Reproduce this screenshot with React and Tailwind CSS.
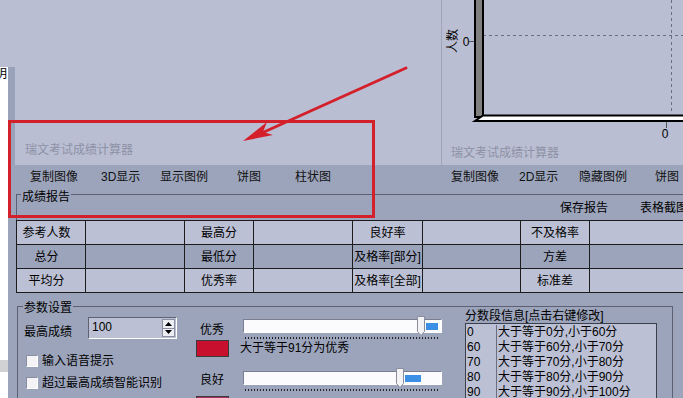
import React from 'react';

const reportRows = [
  { bg: 'bg-[#bcc0d4]', cells: ['参考人数', '最高分', '良好率', '不及格率'] },
  { bg: 'bg-[#9ca4bb]', cells: ['总分', '最低分', '及格率[部分]', '方差'] },
  { bg: 'bg-[#bcc0d4]', cells: ['平均分', '优秀率', '及格率[全部]', '标准差'] },
];

const bands = [
  ['0', '大于等于0分,小于60分'],
  ['60', '大于等于60分,小于70分'],
  ['70', '大于等于70分,小于80分'],
  ['80', '大于等于80分,小于90分'],
  ['90', '大于等于90分,小于100分'],
];

// trackbar: white sunken track, thumb with pointed foot, blue selection after it
const Slider = ({ thumbAt, fillWidth }) => (
  <div className="w-[199px]">
    <div className="flex h-[14px] items-center border border-t-[#7a7e90] border-l-[#7a7e90] border-b-white border-r-white bg-[#fbfbfd]">
      <div style={{ width: thumbAt }} className="shrink-0" />
      <svg width="8" height="20" className="-my-[3px] shrink-0 self-start -mt-[4px]">
        <polygon points="0.5,0.5 7.5,0.5 7.5,15.5 4,19.5 0.5,15.5" fill="#f3f3f6" stroke="#8a8e9e" />
      </svg>
      <div style={{ width: fillWidth }} className="ml-[1px] h-[7px] bg-[#3b8fe4]" />
    </div>
    <div className="ml-[2px] mt-[4px] h-[2px] w-[193px] bg-[repeating-linear-gradient(90deg,#222_0_1px,transparent_1px_3px)]" />
  </div>
);

const Checkbox = () => (
  <div className="ml-[2px] h-[12px] w-[12px] shrink-0 border border-t-[#8a8e9e] border-l-[#8a8e9e] border-b-white border-r-white bg-[#f4f4f6]" />
);

const Chart = () => (
  <svg width="241" height="140" className="block shrink-0">
    <text x="11" y="41" transform="rotate(-90 11 41)" textAnchor="middle" dominantBaseline="central" fontSize="12">
      人数
    </text>
    <text x="24" y="46" textAnchor="middle" fontSize="12">0</text>
    <line x1="27" y1="41.5" x2="33" y2="41.5" stroke="#555" />
    <line x1="41" y1="35.5" x2="241" y2="35.5" stroke="#6c7083" strokeDasharray="3 3" />
    <line x1="229.5" y1="0" x2="229.5" y2="114" stroke="#6c7083" strokeDasharray="3 3" />
    <rect x="33" y="-5" width="8" height="122" fill="#808080" stroke="#000" strokeWidth="2" />
    <polygon points="41,115.5 250,115.5 250,121 33,121" fill="#fff" stroke="#000" strokeWidth="2" />
    <line x1="224.5" y1="122" x2="224.5" y2="128" stroke="#555" />
    <text x="223" y="138" textAnchor="middle" fontSize="12">0</text>
  </svg>
);

const App = () => {
  return (
    <div className="relative flex h-[398px] w-[683px] overflow-hidden bg-[#babed2] font-[Liberation_Sans,Noto_Sans_CJK_SC,sans-serif] text-[12px] leading-[14px] text-black">
      {/* window behind, on the left */}
      <div className="flex w-[8px] shrink-0 flex-col">
        <div className="h-[67px] shrink-0" />
        <div className="flex flex-1 flex-col overflow-hidden bg-white">
          <span className="-ml-[5px] whitespace-nowrap">明</span>
          <div className="mt-[279px] h-[12px] bg-[#d2d2d5]" />
        </div>
      </div>

      <div className="flex min-w-0 flex-1 flex-col">
        {/* title area + chart */}
        <div className="flex h-[165px] shrink-0">
          <div className="flex w-[7px] shrink-0 flex-col">
            <div className="h-[67px]" />
            <div className="flex-1 bg-[#9aa2ba]" />
          </div>
          <div className="flex w-[426px] shrink-0 flex-col justify-end pb-[8px] pl-[10px] text-[#8d91a6]">
            瑞文考试成绩计算器
          </div>
          <div className="flex min-w-0 flex-1 flex-col border-l border-[#a0a5b9]">
            <Chart />
            <div className="mt-[6px] whitespace-nowrap pl-[9px] text-[#8d91a6]">瑞文考试成绩计算器</div>
          </div>
        </div>

        {/* toolbar */}
        <div className="flex h-[28px] shrink-0 whitespace-nowrap bg-[#9ca4bb] pl-[22px] pt-[5px] text-[#111]">
          <span className="w-[71px] shrink-0">复制图像</span>
          <span className="w-[59px] shrink-0">3D显示</span>
          <span className="w-[77px] shrink-0">显示图例</span>
          <span className="w-[58px] shrink-0">饼图</span>
          <span className="w-[156px] shrink-0">柱状图</span>
          <span className="w-[68px] shrink-0">复制图像</span>
          <span className="w-[60px] shrink-0">2D显示</span>
          <span className="w-[76px] shrink-0">隐藏图例</span>
          <span className="shrink-0">饼图</span>
        </div>

        <div className="flex flex-1 flex-col bg-[#9ca4bb]">
          {/* 成绩报告 */}
          <div className="ml-[8px] mt-[1px] border-l border-t border-[#5c6072]">
            <div className="-mt-[5px] flex h-[30px] whitespace-nowrap">
              <span className="ml-[4px] h-[14px] shrink-0 bg-[#9ca4bb] px-[1px]">成绩报告</span>
              <div className="mb-[5px] ml-[489px] flex shrink-0 self-end">
                <span className="w-[80px]">保存报告</span>
                <span>表格截图</span>
              </div>
            </div>
            <div className="-ml-px grid grid-cols-[69px_99px_69px_99px_70px_98px_69px_1fr] border-l border-t border-[#1c1c1c]">
              {reportRows.map((row, r) =>
                row.cells.map((c, i) => (
                  <React.Fragment key={r + '-' + i}>
                    <div
                      className={`${row.bg} flex h-[24px] items-center justify-center whitespace-nowrap border-b border-r border-[#1c1c1c] ${i === 0 ? 'pr-[9px]' : ''}`}
                    >
                      {c}
                    </div>
                    <div className={`${row.bg} h-[24px] border-b border-[#1c1c1c] ${i < 3 ? 'border-r' : ''}`} />
                  </React.Fragment>
                ))
              )}
            </div>
          </div>

          {/* 参数设置 */}
          <div className="ml-[9px] mt-[13px] flex w-[656px] flex-1 border-l border-r border-t border-[#5c6072]">
            <div className="flex w-[178px] shrink-0 flex-col pl-[6px]">
              <span className="-ml-[1px] -mt-[6px] w-fit bg-[#9ca4bb] px-[1px]">参数设置</span>
              <div className="mt-[2px] flex items-end">
                <span className="w-[64px] shrink-0">最高成绩</span>
                <div className="flex h-[22px] w-[89px] border border-b-white border-l-[#5e6274] border-r-white border-t-[#5e6274] bg-[#bcc0d4]">
                  <span className="flex-1 pl-[3px] pt-[2px]">100</span>
                  <div className="my-px mr-px flex w-[13px] flex-col">
                    <div className="flex flex-1 items-center justify-center border border-[#8a8e9e] bg-[#eceef4]">
                      <svg width="7" height="4"><polygon points="3.5,0 7,4 0,4" fill="#000" /></svg>
                    </div>
                    <div className="flex flex-1 items-center justify-center border border-t-0 border-[#8a8e9e] bg-[#eceef4]">
                      <svg width="7" height="4"><polygon points="0,0 7,0 3.5,4" fill="#000" /></svg>
                    </div>
                  </div>
                </div>
              </div>
              <div className="mt-[15px] flex h-[14px] items-center whitespace-nowrap">
                <Checkbox />
                <span className="ml-[4px]">输入语音提示</span>
              </div>
              <div className="mt-[8px] flex h-[14px] items-center whitespace-nowrap">
                <Checkbox />
                <span className="ml-[4px]">超过最高成绩智能识别</span>
              </div>
            </div>

            <div className="flex w-[246px] shrink-0 flex-col">
              <div className="mt-[12px] flex items-start">
                <span className="ml-[4px] mt-[4px] w-[43px] shrink-0">优秀</span>
                <Slider thumbAt={173} fillWidth={12} />
              </div>
              <div className="mt-[1px] flex items-center whitespace-nowrap">
                <div className="h-[17px] w-[33px] shrink-0 border border-[#3a3a3a] bg-[#c8102e]" />
                <span className="ml-[11px] leading-[17px]">大于等于91分为优秀</span>
              </div>
              <div className="mt-[14px] flex items-start">
                <span className="ml-[4px] mt-[2px] w-[43px] shrink-0">良好</span>
                <Slider thumbAt={152} fillWidth={16} />
              </div>
              <div className="mt-[5px] h-[17px] w-[33px] border border-[#3a3a3a] bg-[#a8306c]" />
            </div>

            <div className="ml-[23px] flex w-[192px] shrink-0 flex-col">
              <span className="mt-[2px] whitespace-nowrap">分数段信息[点击右键修改]</span>
              <div className="flex flex-1 border border-b-0 border-[#3c3f4c] bg-[#bcc0d4] pt-[1px] leading-[15px]">
                <div className="flex w-[31px] shrink-0 flex-col border-r border-[#6a6e80] pl-[1px]">
                  {bands.map(([v]) => (
                    <span key={v}>{v}</span>
                  ))}
                </div>
                <div className="flex flex-col whitespace-nowrap pl-[1px]">
                  {bands.map(([v, t]) => (
                    <span key={v}>{t}</span>
                  ))}
                </div>
              </div>
            </div>
          </div>
        </div>
      </div>

      {/* red annotation over the screenshot */}
      <svg className="pointer-events-none absolute inset-0" width="683" height="398">
        <rect x="9.5" y="121.5" width="364" height="95" fill="none" stroke="#d3202b" strokeWidth="3" />
        <line x1="406" y1="68" x2="264" y2="132" stroke="#d3202b" strokeWidth="3" strokeLinecap="round" />
        <polygon points="243,141 273,135 263,132 267,122" fill="#d3202b" />
      </svg>
    </div>
  );
};

export default App;
